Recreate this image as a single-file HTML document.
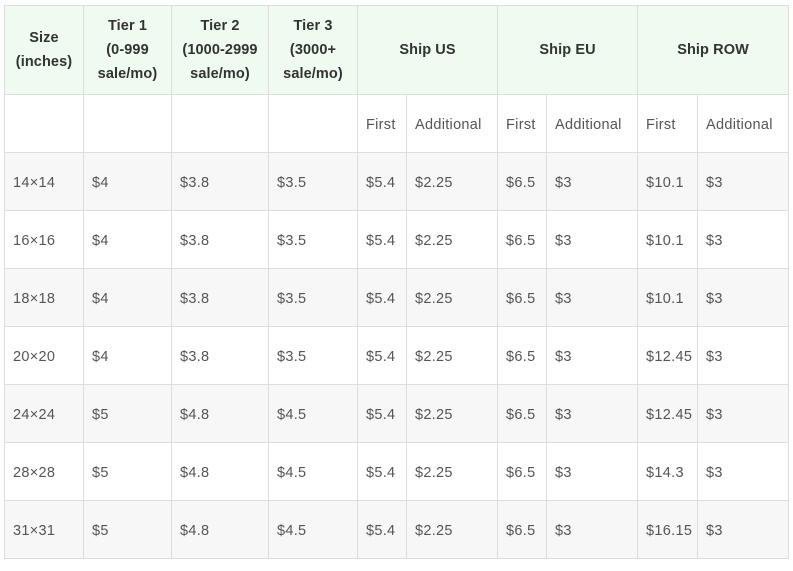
<!DOCTYPE html>
<html><head><style>
body{margin:0;background:#fff;font-family:"Liberation Sans",sans-serif;}
table{position:absolute;left:4px;top:5px;border-collapse:collapse;table-layout:fixed;width:785px;font-size:14.5px;color:#555;}
td,th{border:1px solid #ddd;padding:0 0 0 8px;text-align:left;vertical-align:middle;}
td{letter-spacing:0.3px;padding-top:2px;}
th{background:#effaf0;color:#333;font-weight:bold;text-align:center;padding:0 4px;line-height:24px;height:88px;font-size:14.5px;letter-spacing:0.1px;}
tr.r td{height:55px;}
tr.s td{height:55px;}
tr.g td{background:#f7f7f7;}
</style></head><body>
<table>
<colgroup><col style="width:79px"><col style="width:88px"><col style="width:97px"><col style="width:89px"><col style="width:49px"><col style="width:91px"><col style="width:49px"><col style="width:91px"><col style="width:60px"><col style="width:91px"></colgroup>
<tr><th>Size<br>(inches)</th><th>Tier 1<br>(0-999<br>sale/mo)</th><th>Tier 2<br>(1000-2999<br>sale/mo)</th><th>Tier 3<br>(3000+<br>sale/mo)</th><th colspan="2">Ship US</th><th colspan="2">Ship EU</th><th colspan="2">Ship ROW</th></tr>
<tr class="s"><td></td><td></td><td></td><td></td><td>First</td><td>Additional</td><td>First</td><td>Additional</td><td>First</td><td>Additional</td></tr>
<tr class="r g"><td>14×14</td><td>$4</td><td>$3.8</td><td>$3.5</td><td>$5.4</td><td>$2.25</td><td>$6.5</td><td>$3</td><td>$10.1</td><td>$3</td></tr>
<tr class="r"><td>16×16</td><td>$4</td><td>$3.8</td><td>$3.5</td><td>$5.4</td><td>$2.25</td><td>$6.5</td><td>$3</td><td>$10.1</td><td>$3</td></tr>
<tr class="r g"><td>18×18</td><td>$4</td><td>$3.8</td><td>$3.5</td><td>$5.4</td><td>$2.25</td><td>$6.5</td><td>$3</td><td>$10.1</td><td>$3</td></tr>
<tr class="r"><td>20×20</td><td>$4</td><td>$3.8</td><td>$3.5</td><td>$5.4</td><td>$2.25</td><td>$6.5</td><td>$3</td><td>$12.45</td><td>$3</td></tr>
<tr class="r g"><td>24×24</td><td>$5</td><td>$4.8</td><td>$4.5</td><td>$5.4</td><td>$2.25</td><td>$6.5</td><td>$3</td><td>$12.45</td><td>$3</td></tr>
<tr class="r"><td>28×28</td><td>$5</td><td>$4.8</td><td>$4.5</td><td>$5.4</td><td>$2.25</td><td>$6.5</td><td>$3</td><td>$14.3</td><td>$3</td></tr>
<tr class="r g"><td>31×31</td><td>$5</td><td>$4.8</td><td>$4.5</td><td>$5.4</td><td>$2.25</td><td>$6.5</td><td>$3</td><td>$16.15</td><td>$3</td></tr>
</table>
</body></html>
